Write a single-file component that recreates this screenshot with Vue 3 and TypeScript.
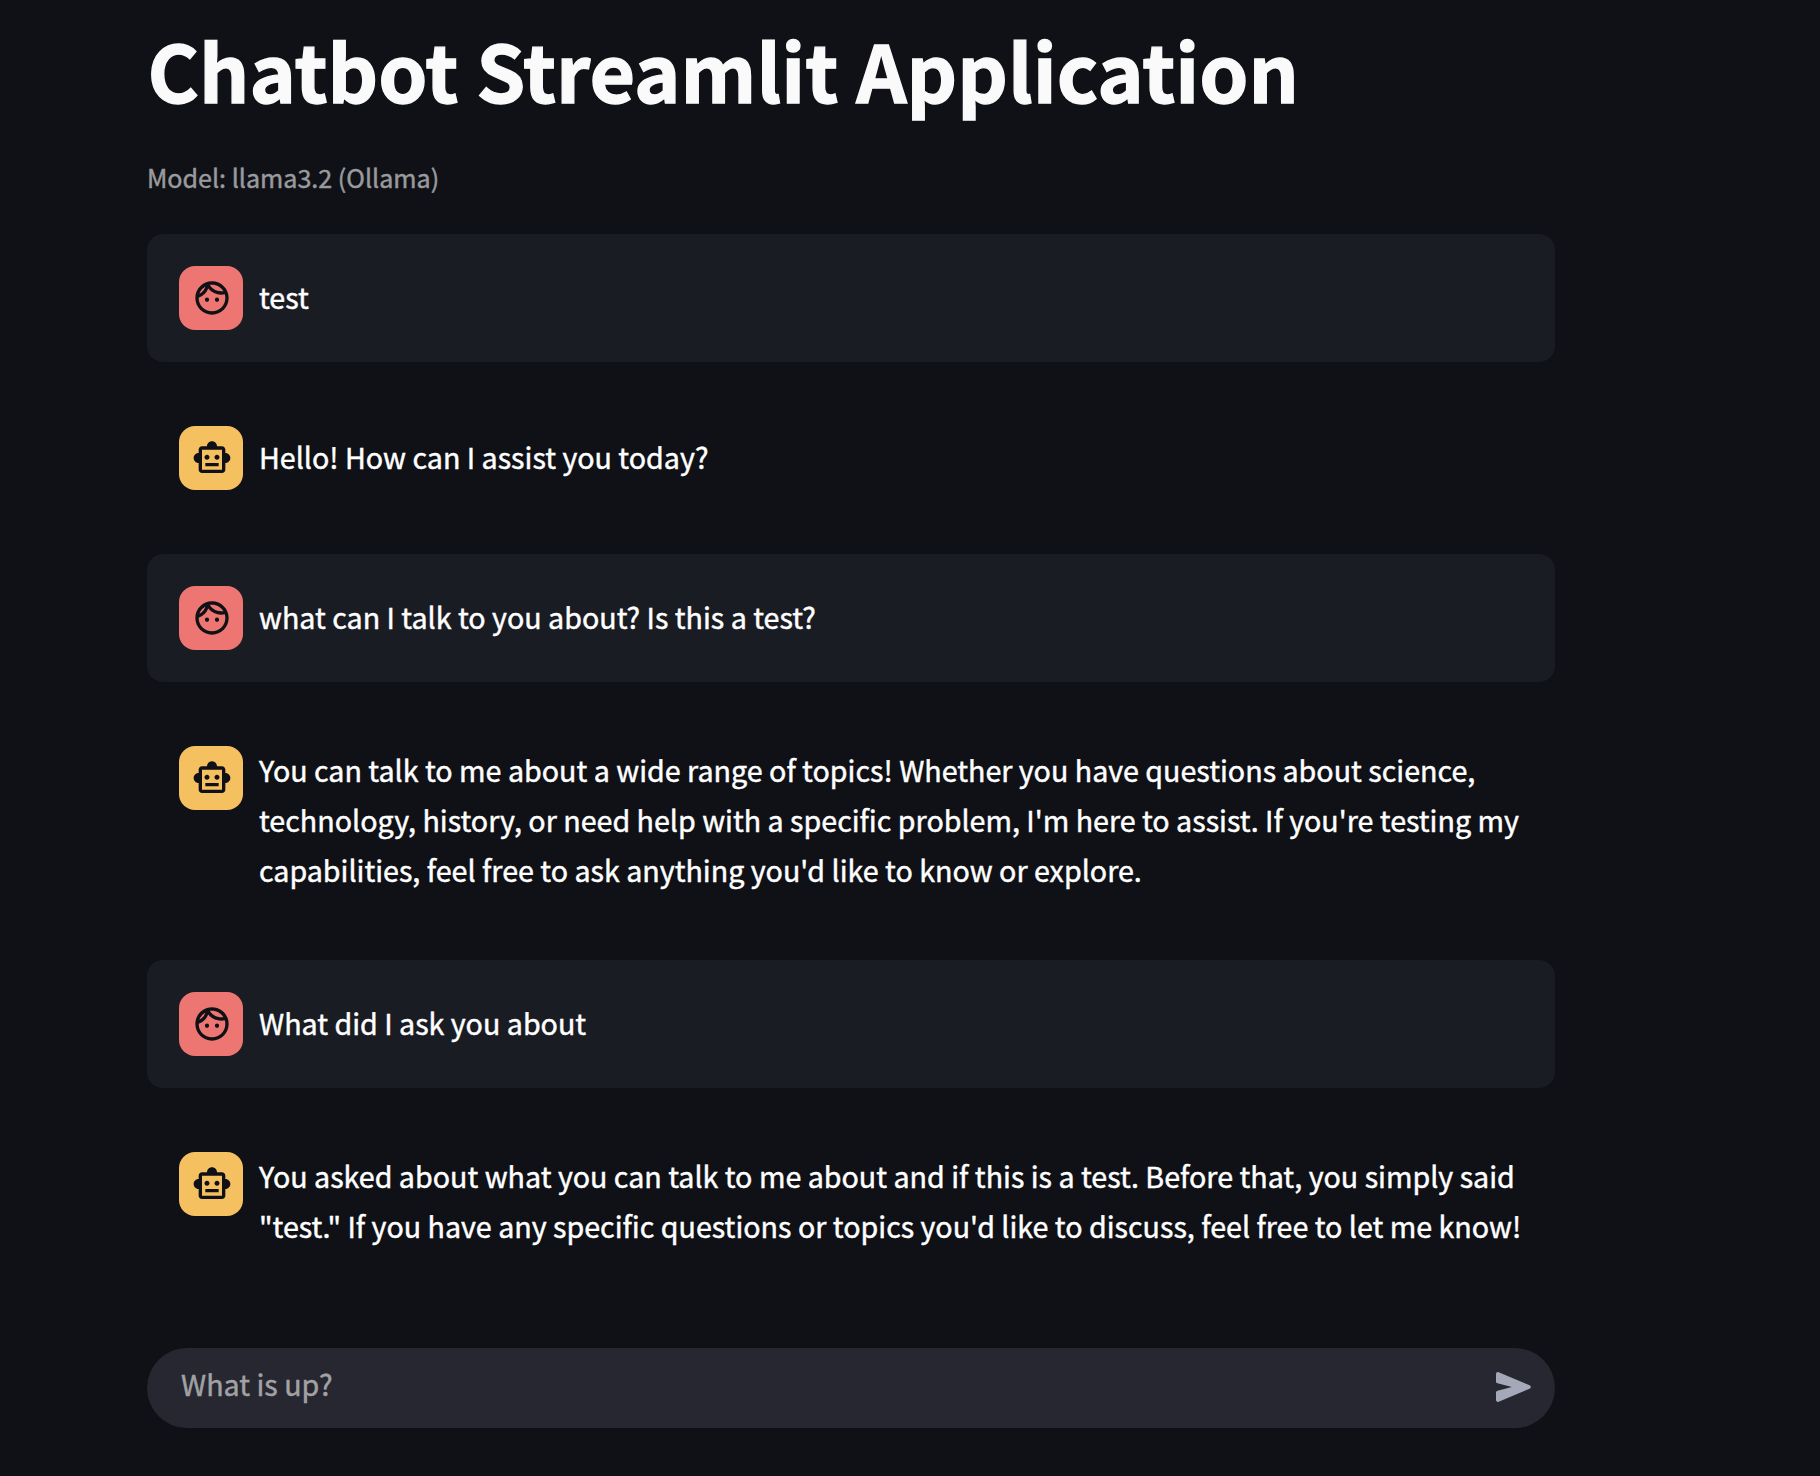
<script setup lang="ts">
import { ref } from 'vue'

interface Message {
  role: 'user' | 'assistant'
  lines: string[]
}

const title = 'Chatbot Streamlit Application'
const caption = 'Model: llama3.2 (Ollama)'
const prompt = ref('')

const messages: Message[] = [
  { role: 'user', lines: ['test'] },
  { role: 'assistant', lines: ['Hello! How can I assist you today?'] },
  { role: 'user', lines: ['what can I talk to you about? Is this a test?'] },
  {
    role: 'assistant',
    lines: [
      'You can talk to me about a wide range of topics! Whether you have questions about science,',
      "technology, history, or need help with a specific problem, I'm here to assist. If you're testing my",
      "capabilities, feel free to ask anything you'd like to know or explore.",
    ],
  },
  { role: 'user', lines: ['What did I ask you about'] },
  {
    role: 'assistant',
    lines: [
      'You asked about what you can talk to me about and if this is a test. Before that, you simply said',
      '"test." If you have any specific questions or topics you\'d like to discuss, feel free to let me know!',
    ],
  },
]
</script>

<template>
  <main class="app">
    <h1 class="title">{{ title }}</h1>
    <p class="caption">{{ caption }}</p>

    <section class="messages">
      <article v-for="(message, i) in messages" :key="i" class="message" :class="message.role">
        <div class="avatar">
          <svg v-if="message.role === 'user'" viewBox="0 0 24 24" aria-hidden="true">
            <path d="M10.25 13c0 .69-.56 1.25-1.25 1.25S7.75 13.69 7.75 13s.56-1.25 1.25-1.25 1.25.56 1.25 1.25zM15 11.75c-.69 0-1.25.56-1.25 1.25s.56 1.25 1.25 1.25 1.25-.56 1.25-1.25-.56-1.25-1.25-1.25zm7 .25c0 5.52-4.48 10-10 10S2 17.52 2 12 6.48 2 12 2s10 4.48 10 10zM10.66 4.12C12.06 6.44 14.6 8 17.5 8c.46 0 .91-.05 1.34-.12C17.44 5.56 14.9 4 12 4c-.46 0-.91.05-1.34.12zM4.42 9.47a8.046 8.046 0 003.66-4.44 8.046 8.046 0 00-3.66 4.44zM20 12c0-.78-.12-1.53-.33-2.24-.7.15-1.42.24-2.17.24a10 10 0 01-7.76-3.69A10.016 10.016 0 014 11.86c.01.04 0 .09 0 .14 0 4.41 3.59 8 8 8s8-3.59 8-8z" />
          </svg>
          <svg v-else viewBox="0 0 24 24" aria-hidden="true">
            <path d="M20 9V7c0-1.1-.9-2-2-2h-3c0-1.66-1.34-3-3-3S9 3.34 9 5H6c-1.1 0-2 .9-2 2v2c-1.66 0-3 1.34-3 3s1.34 3 3 3v4c0 1.1.9 2 2 2h12c1.1 0 2-.9 2-2v-4c1.66 0 3-1.34 3-3s-1.34-3-3-3zm-2 10H6V7h12v12zm-9-6c-.83 0-1.5-.67-1.5-1.5S8.17 10 9 10s1.5.67 1.5 1.5S9.83 13 9 13zm7.5-1.5c0 .83-.67 1.5-1.5 1.5s-1.5-.67-1.5-1.5.67-1.5 1.5-1.5 1.5.67 1.5 1.5zM8 15h8v2H8v-2z" />
          </svg>
        </div>
        <p class="text">
          <span v-for="line in message.lines" :key="line" class="line">{{ line }}</span>
        </p>
      </article>
    </section>

    <form class="chat-input" @submit.prevent>
      <input v-model="prompt" type="text" placeholder="What is up?" />
      <button type="submit" aria-label="Send">
        <svg viewBox="0 0 35 30" aria-hidden="true">
          <path d="M0 1.9C0 .6 1.4-.4 2.7.2L33.6 13.3c1.6.7 1.6 2.7 0 3.4L2.7 29.8C1.4 30.4 0 29.4 0 28.1V20.600C0 19.700.6 19 1.500 18.800L15.800 15 1.500 11.200C.6 11 0 10.300 0 9.400Z" />
        </svg>
      </button>
    </form>
  </main>
</template>

<style>
body {
  margin: 0;
  background: #0f1116;
}
</style>

<style scoped>
.app {
  box-sizing: border-box;
  width: 1555px;
  height: 1476px;
  padding-left: 147px;
  overflow: hidden;
  color: #fff;
  font-family: 'Noto Sans CJK SC', 'Noto Sans', sans-serif;
  font-size: 28.65px;
  line-height: 50px;
  -webkit-text-stroke: 0.45px currentColor;
}

.title {
  margin: 0;
  padding: 16px 0 1px 0.5px;
  height: 106px;
  color: #fafafa;
  font-size: 78.7px;
  font-weight: 700;
  line-height: 106px;
  white-space: nowrap;
  -webkit-text-stroke-width: 1.3px;
}

.caption {
  margin: 32px 0 0;
  height: 79px;
  color: #9a9a9d;
  font-size: 25.08px;
  line-height: 44px;
}

.messages {
  display: flex;
  flex-direction: column;
  gap: 32px;
}

.message {
  display: flex;
  gap: 16px;
  padding: 32px;
  border-radius: 16px;
}

.message.user {
  background: #1a1c23;
}

.avatar {
  display: flex;
  flex: none;
  align-items: center;
  justify-content: center;
  box-sizing: border-box;
  width: 64px;
  height: 64px;
  padding-left: 2px;
  border-radius: 16px;
  background: #f5c05f;
}

.user .avatar {
  background: #ed7672;
}

.avatar svg {
  width: 40px;
  height: 40px;
  fill: #0f1116;
}

.text {
  display: flex;
  flex-direction: column;
  justify-content: center;
  margin: -1px 0 1px;
}

.line {
  white-space: nowrap;
}

.chat-input {
  display: flex;
  align-items: center;
  justify-content: space-between;
  box-sizing: border-box;
  height: 80px;
  margin-top: 64px;
  padding: 0 24px 2px 34px;
  border-radius: 40px;
  background: #262730;
}

.chat-input input {
  flex: 1;
  height: 50px;
  padding: 0 0 6px;
  box-sizing: border-box;
  border: 0;
  outline: 0;
  background: transparent;
  color: #fafafa;
  font: inherit;
}

.chat-input input::placeholder {
  color: #a2a2a5;
  opacity: 1;
}

.chat-input button {
  display: flex;
  padding: 0;
  border: 0;
  background: none;
}

.chat-input svg {
  width: 35px;
  height: 30px;
  fill: #a5a8b8;
}
</style>
